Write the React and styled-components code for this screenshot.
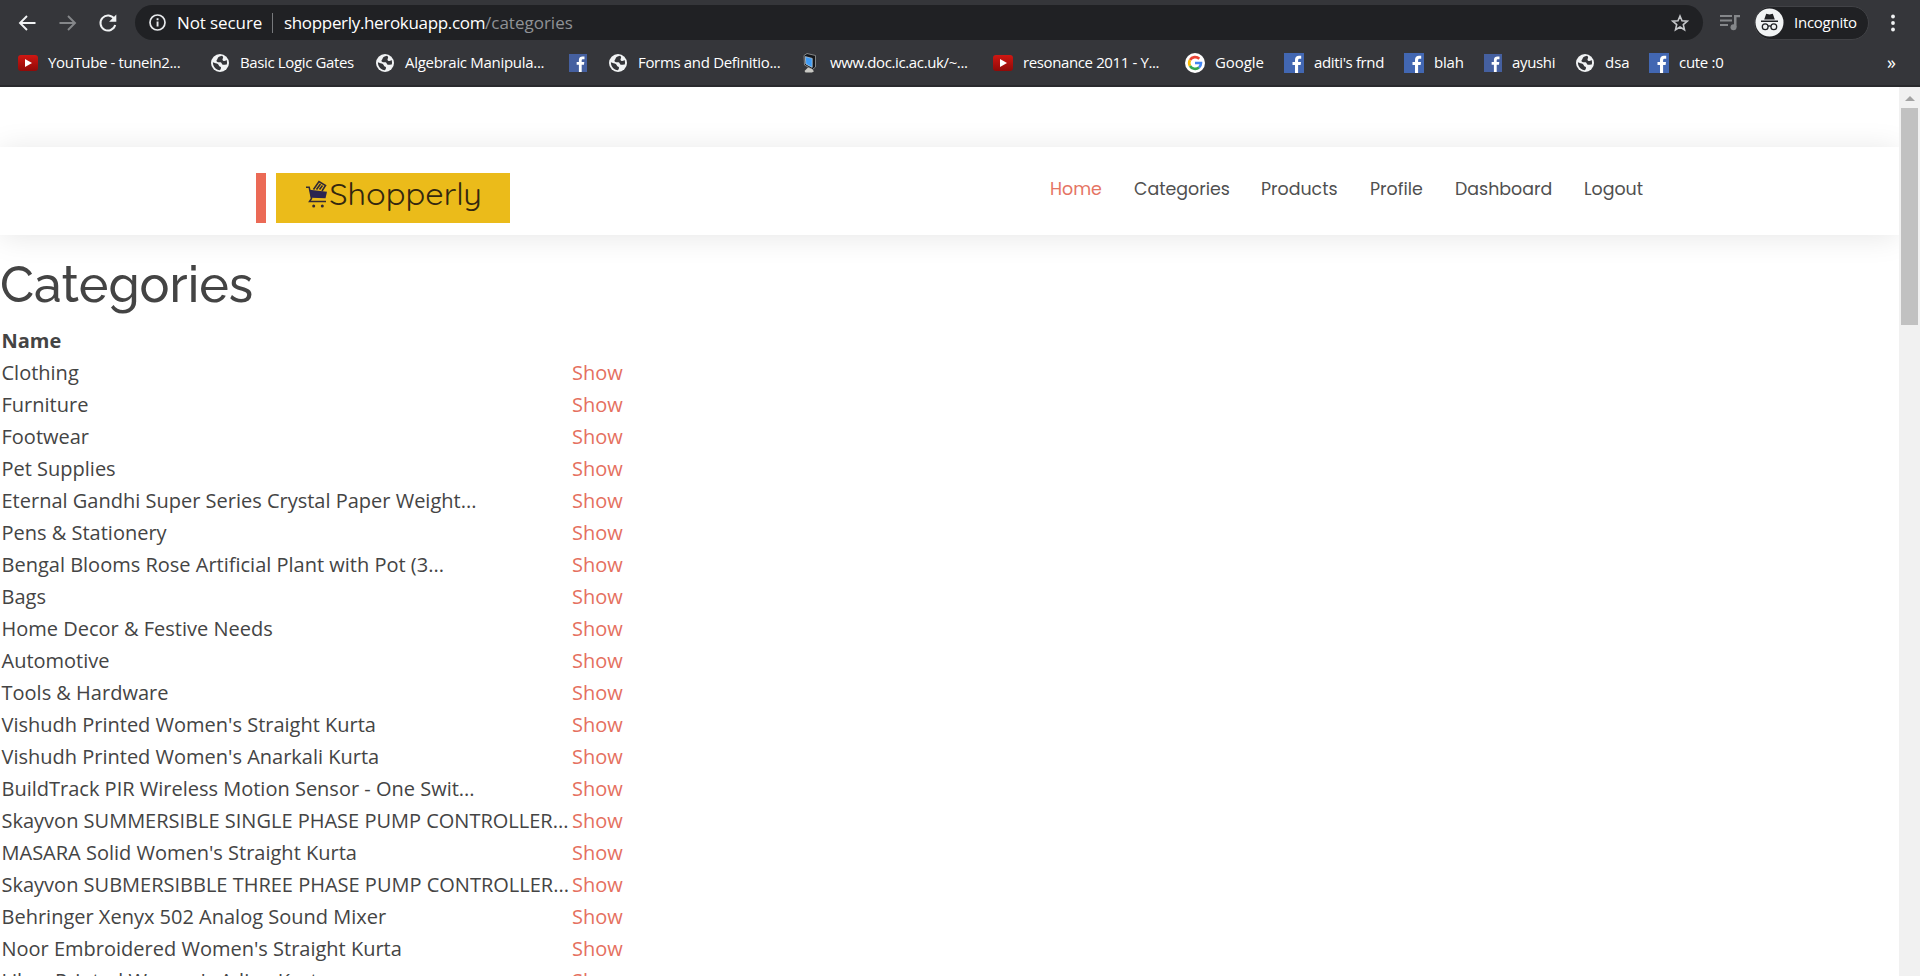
import React from 'react';
import styled, { createGlobalStyle } from 'styled-components';

const Global = createGlobalStyle`
  * { box-sizing: border-box; }
  html, body { margin: 0; background: #fff; overflow: hidden; }
  svg { display: block; flex: none; }
`;
const Window = styled.div`
  width: 1920px;
  height: 976px;
  display: flex;
  flex-direction: column;
  overflow: hidden;
  font-family: 'Open Sans', sans-serif;
`;
const Chrome = styled.header`
  flex: none;
  height: 87px;
  background: #35363a;
  border-bottom: 2px solid #292a2d;
  color: #fff;
`;
const Toolbar = styled.div`
  display: flex;
  align-items: center;
  height: 40px;
  padding: 5px 0 0 18px;
`;
const NavIcons = styled.div`
  display: flex;
  gap: 20px;
  width: 117px;
`;
const AddressBar = styled.div`
  display: flex;
  align-items: center;
  width: 1568px;
  height: 35px;
  padding: 0 13px 0 14px;
  border-radius: 18px;
  background: #202124;
`;
const Label = styled.span`
  display: block;
  white-space: nowrap;
  width: ${(p) => (p.$w ? `${p.$w}px` : 'auto')};
  padding-bottom: 1px;
  margin-left: ${(p) => p.$ml || 0}px;
  color: ${(p) => p.$color || 'inherit'};
  font-size: ${(p) => p.$size || 17}px;
  letter-spacing: ${(p) => p.$ls || 0}px;
`;
const Divider = styled.i`
  width: 1px;
  height: 20px;
  margin: 0 11px 0 10px;
  background: #77797c;
`;
const Star = styled.div`
  margin-left: auto;
`;
const QueueIcon = styled.div`
  margin-left: 16px;
`;
const Incognito = styled.div`
  display: flex;
  align-items: center;
  width: 115px;
  height: 34px;
  margin: 0 12px 0 13px;
  border: 1px solid #414246;
  border-radius: 17px;
  background: #202124;
`;
const Bookmarks = styled.nav`
  display: flex;
  align-items: center;
  height: 45px;
  padding-left: 18px;
`;
const Bookmark = styled.div`
  display: flex;
  align-items: center;
  gap: ${(p) => p.$gap}px;
  flex: none;
  width: ${(p) => p.$w}px;
`;
const Page = styled.div`
  display: flex;
  flex: 1;
  min-height: 0;
`;
const Content = styled.main`
  width: 1899px;
  padding-top: 60px;
  overflow: hidden;
  color: #444;
`;
const SiteHeader = styled.div`
  display: flex;
  height: 88px;
  padding: 26px 0 0 256px;
  background: #fff;
  box-shadow: 0 2px 30px rgba(0, 0, 0, 0.1);
`;
const Brand = styled.div`
  width: 254px;
  height: 50px;
  padding-left: 10px;
  border-left: 10px solid #eb6a56;
`;
const SiteNav = styled.nav`
  display: flex;
  margin-left: 540px;
  height: 32px;
  align-items: center;
`;
const NavLink = styled.a`
  width: ${(p) => p.$w}px;
  white-space: nowrap;
  font-family: Poppins, 'Open Sans', sans-serif;
  font-size: 17.4px;
  color: ${(p) => (p.$active ? '#e57463' : '#505050')};
`;
const Title = styled.h1`
  margin: 20px 0 8px;
  height: 62px;
  font: 500 50px/60px Raleway, 'Open Sans', sans-serif;
`;
const Table = styled.table`
  border-collapse: collapse;
  font-size: 20px;
  line-height: 30px;
  td, th { padding: 1px; height: 32px; text-align: left; white-space: nowrap; }
  td:first-child, th:first-child { padding-left: 1.5px; }
  th { font-weight: 700; }
`;
const NameCell = styled.td`
  width: 571px;
  max-width: 571px;
`;
const ShowLink = styled.a`
  color: #e57060;
`;
const ScrollTrack = styled.aside`
  width: 21px;
  background: #f1f1f1;
  display: flex;
  flex-direction: column;
  align-items: center;
`;
const ScrollThumb = styled.div`
  width: 17px;
  height: 217px;
  background: #c1c1c1;
`;
const ArrowUp = styled.div`
  height: 21px;
  padding-top: 9px;
`;

const Arrow = ({ color = '#f1f3f4', flip }) => (
  <svg width="20" height="20" viewBox="0 0 20 20" fill="none" stroke={color} strokeWidth="1.9">
    <path d={flip ? 'M1.500 10H16.500M10 3l7 7-7 7' : 'M17.500 10H2.500M9 3l-7 7 7 7'} />
  </svg>
);
const Reload = () => (
  <svg width="20" height="20" viewBox="0 0 20 20">
    <path d="M16.3 6A7.5 7.5 0 1 0 17.2 12.1" fill="none" stroke="#f1f3f4" strokeWidth="2" />
    <path d="M18.3 1.5v7.200h-7.200z" fill="#f1f3f4" />
  </svg>
);
const Info = () => (
  <svg width="17" height="17" viewBox="0 0 17 17">
    <circle cx="8.500" cy="8.500" r="7.500" fill="none" stroke="#e8eaed" strokeWidth="1.700" />
    <path d="M7.600 7.500h1.900v5H7.600zM7.600 4.300h1.900v1.900H7.600z" fill="#e8eaed" />
  </svg>
);
const StarIcon = () => (
  <svg width="20" height="20" viewBox="0 0 20 20">
    <path d="M10 3l2 4.700 5.300.4-4 3.500 1.200 5.200L10 14l-4.500 2.800 1.200-5.200-4-3.500 5.300-.4z" fill="none" stroke="#c5c7ca" strokeWidth="1.600" />
  </svg>
);
const Queue = () => (
  <svg width="22" height="18" viewBox="0 0 22 18" fill="#85878a">
    <path d="M1 1h12v2H1zM1 5.500h12v2H1zM1 10h8v2H1zM15 1h6v2.300h-3.500V13H15z" />
    <circle cx="14.500" cy="13.300" r="3" />
  </svg>
);
const Spy = () => (
  <svg width="29" height="29" viewBox="0 0 29 29">
    <circle cx="14.500" cy="14.500" r="14" fill="#f1f3f4" />
    <path d="M11.200 5.800l3.300.6 3.300-.6 2 5.700H9.200zM6 12.500h17v1.400H6z" fill="#202124" />
    <g fill="none" stroke="#202124" strokeWidth="1.300">
      <circle cx="10.200" cy="18.800" r="2.900" />
      <circle cx="18.800" cy="18.800" r="2.900" />
      <path d="M13.100 18.400q1.400-1 2.800 0" />
    </g>
  </svg>
);
const Dots = () => (
  <svg width="24" height="20" viewBox="0 0 24 20" fill="#f1f3f4">
    <circle cx="12" cy="3.500" r="1.900" /><circle cx="12" cy="10" r="1.900" /><circle cx="12" cy="16.500" r="1.900" />
  </svg>
);
const YouTube = () => (
  <svg width="20" height="18" viewBox="0 0 20 18">
    <defs>
      <linearGradient id="yt" x1="0" y1="0" x2="0" y2="1">
        <stop offset="0" stopColor="#d01712" /><stop offset="1" stopColor="#8f0a08" />
      </linearGradient>
    </defs>
    <rect y="1" width="20" height="16" rx="3" fill="url(#yt)" />
    <path d="M7 5l7 4-7 4z" fill="#fff" />
  </svg>
);
const Globe = () => (
  <svg width="20" height="20" viewBox="0 0 20 20">
    <circle cx="10" cy="10" r="9" fill="#f1f3f4" />
    <path d="M12 2.800C9.500 3.300 8 4 7.600 5.400S6 7.300 6.700 8.400s2.600.3 3.900.9 1 2.200 2.200 2.400 2.700-.4 4-.2c.4-1.600.3-3-.3-4.400-1 .8-2.300 1.300-3.400.6S12.600 5.800 13 5s-.2-1.500-1-2.200z" fill="#35363a" />
    <path d="M2.900 9.300c1.700 1 3.700.8 4.900 1.600s.8 2 1.900 2.500 1.600.8 1.200 2-.9 1.300-1 1.900C6 17.200 2.700 13.500 2.900 9.300z" fill="#35363a" />
  </svg>
);
const Facebook = ({ big }) => (
  <svg width={big ? 20 : 18} height={big ? 20 : 18} viewBox="0 0 20 20">
    <rect width="20" height="20" fill={big ? '#4267b2' : '#4560a0'} />
    <path d="M11 20v-8H8.500V9H11V6.800C11 4 12.600 2.800 15 2.800h2.200v2.900h-1.500c-1.200 0-1.600.6-1.600 1.500V9H17l-.4 3h-2.500v8z" fill="#fff" />
  </svg>
);
const Computer = () => (
  <svg width="16" height="20" viewBox="0 0 16 20">
    <path d="M2 2.500l3-2 8.500 2v11.500l-3 2.500L2.500 12z" fill="#15171a" stroke="#8d8f90" strokeWidth=".9" />
    <path d="M3.300 3.600l6.900 1.800v9L3.800 11z" fill="#3d9bf5" stroke="#c8d4dd" strokeWidth=".7" />
    <path d="M6 14.500l4 1.500 2 2.300-2 1.200H3.500l-1-1.500z" fill="#c9c9c4" />
  </svg>
);
const Google = () => (
  <svg width="20" height="20" viewBox="0 0 20 20">
    <circle cx="10" cy="10" r="10" fill="#fff" />
    <g fill="none" strokeWidth="2.600">
      <path d="M5 7A6 6 0 0 1 14.300 5.800" stroke="#ea4335" />
      <path d="M5 13A6 6 0 0 1 5 7" stroke="#fbbc05" />
      <path d="M14 14.500A6 6 0 0 1 5 13" stroke="#34a853" />
      <path d="M10 10h6A6 6 0 0 1 14 14.500" stroke="#4285f4" />
    </g>
  </svg>
);
const Logo = () => (
  <svg width="234" height="50" viewBox="0 0 234 50">
    <rect width="234" height="50" fill="#ebbb1a" />
    <g stroke="#332a35" fill="none" strokeWidth="1.500">
      <path d="M30 14.300h3.200l2.300 11.200-2 3H50" />
      <path d="M37.500 16.500l5.500-8 6.500 4-3.500 5.500M40.500 16.500l4-5.500M43.500 16.500l3-4" strokeWidth="1.600" />
    </g>
    <path d="M33.500 16.700l17.500 2-1.500 6.500-14.500-.5z" fill="#2b2550" />
    <circle cx="37.700" cy="33" r="1.500" fill="#332a35" /><circle cx="46.300" cy="33" r="1.500" fill="#332a35" />
    <text x="53.300" y="32.300" textLength="152.500" lengthAdjust="spacingAndGlyphs" fontFamily="Quicksand, Comfortaa, Lato, sans-serif" fontSize="31" fill="#33270f">Shopperly</text>
  </svg>
);

const bookmarks = [
  { icon: YouTube, text: 'YouTube - tunein2...', w: 192, ls: -0.38 },
  { icon: Globe, text: 'Basic Logic Gates', w: 165, ls: -0.37 },
  { icon: Globe, text: 'Algebraic Manipula...', w: 194, ls: -0.3 },
  { icon: Facebook, text: '', w: 39 },
  { icon: Globe, text: 'Forms and Definitio...', w: 194, ls: -0.33 },
  { icon: Computer, text: 'www.doc.ic.ac.uk/~...', w: 191, gap: 12, ls: -0.38 },
  { icon: YouTube, text: 'resonance 2011 - Y...', w: 192, ls: -0.38 },
  { icon: Google, text: 'Google', w: 99, ls: -0.1 },
  { icon: Facebook, text: "aditi's frnd", w: 120, big: true, ls: -0.36 },
  { icon: Facebook, text: 'blah', w: 80, big: true, ls: -0.2 },
  { icon: Facebook, text: 'ayushi', w: 91, ls: -0.35 },
  { icon: Globe, text: 'dsa', w: 74, ls: 0.6 - 0.6 },
  { icon: Facebook, text: 'cute :0', w: 238, big: true, ls: -0.3 },
];
const categories = [
  'Clothing', 'Furniture', 'Footwear', 'Pet Supplies',
  'Eternal Gandhi Super Series Crystal Paper Weight...',
  'Pens & Stationery',
  'Bengal Blooms Rose Artificial Plant with Pot (3...',
  'Bags', 'Home Decor & Festive Needs', 'Automotive', 'Tools & Hardware',
  "Vishudh Printed Women's Straight Kurta",
  "Vishudh Printed Women's Anarkali Kurta",
  'BuildTrack PIR Wireless Motion Sensor - One Swit...',
  'Skayvon SUMMERSIBLE SINGLE PHASE PUMP CONTROLLER...',
  "MASARA Solid Women's Straight Kurta",
  'Skayvon SUBMERSIBBLE THREE PHASE PUMP CONTROLLER...',
  'Behringer Xenyx 502 Analog Sound Mixer',
  "Noor Embroidered Women's Straight Kurta",
  "Libas Printed Women's A-line Kurta",
];
const links = [['Home', 84], ['Categories', 127], ['Products', 109], ['Profile', 85], ['Dashboard', 129], ['Logout', 80]];

export default function App() {
  return (
    <Window>
      <Global />
      <Chrome>
        <Toolbar>
          <NavIcons><Arrow /><Arrow flip color="#85878a" /><Reload /></NavIcons>
          <AddressBar>
            <Info />
            <Label $ml={11} $w={85} $ls={-0.1}>Not secure</Label>
            <Divider />
            <Label $w={201} $ls={-0.33}>shopperly.herokuapp.com</Label>
            <Label $w={90} $color="#8f9296">/categories</Label>
            <Star><StarIcon /></Star>
          </AddressBar>
          <QueueIcon><Queue /></QueueIcon>
          <Incognito><Spy /><Label $ml={10} $w={66} $size={15} $ls={-0.25}>Incognito</Label></Incognito>
          <Dots />
        </Toolbar>
        <Bookmarks>
          {bookmarks.map(({ icon: Icon, text, w, gap = 10, big, ls }, i) => (
            <Bookmark key={i} $w={w} $gap={gap}><Icon big={big} /><Label $size={15} $ls={ls}>{text}</Label></Bookmark>
          ))}
          <Label $size={18}>»</Label>
        </Bookmarks>
      </Chrome>
      <Page>
        <Content>
          <SiteHeader>
            <Brand><Logo /></Brand>
            <SiteNav>
              {links.map(([t, w], i) => <NavLink key={t} $w={w} $active={i === 0}>{t}</NavLink>)}
            </SiteNav>
          </SiteHeader>
          <Title>Categories</Title>
          <Table>
            <tbody>
              <tr><th>Name</th><th /></tr>
              {categories.map((c) => (
                <tr key={c}><NameCell>{c}</NameCell><td><ShowLink>Show</ShowLink></td></tr>
              ))}
            </tbody>
          </Table>
        </Content>
        <ScrollTrack>
          <ArrowUp><svg width="10" height="5" viewBox="0 0 10 5"><path d="M0 5l5-5 5 5z" fill="#a3a3a3" /></svg></ArrowUp>
          <ScrollThumb />
        </ScrollTrack>
      </Page>
    </Window>
  );
}
